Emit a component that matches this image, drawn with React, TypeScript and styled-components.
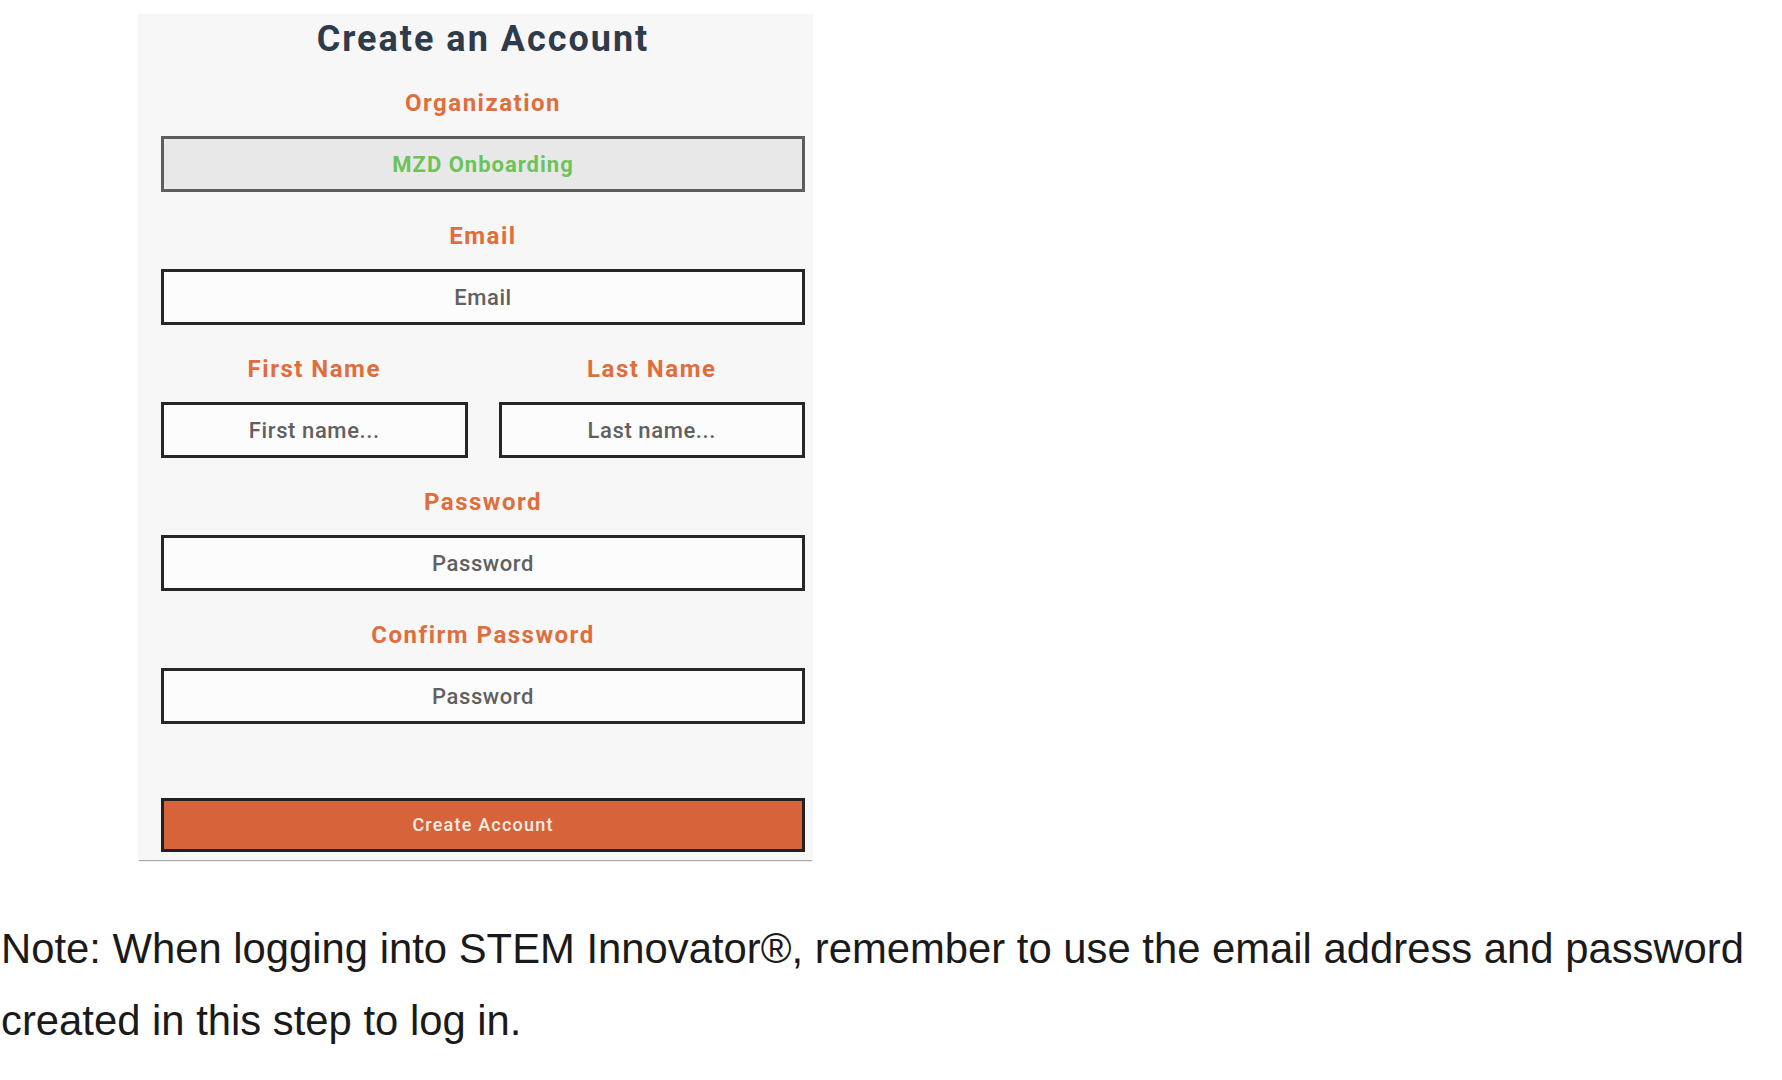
import styled, { createGlobalStyle } from "styled-components"

const GlobalStyle = createGlobalStyle`
  body {
    margin: 0;
    background: #ffffff;
    font-family: Roboto, "Liberation Sans", sans-serif;
  }
`

const Page = styled.div`
  padding-top: 14px;
`

const Figure = styled.div`
  padding-left: 138px;
`

const Card = styled.form`
  width: 675px;
  box-sizing: border-box;
  padding: 3px 8px 8px 23px;
  background: #f7f7f7;
  box-shadow: 0 2px 1px -1px rgba(0, 0, 0, 0.35);
  display: flex;
  flex-direction: column;
`

const Title = styled.h1`
  margin: 0;
  font: 700 36px/44px Roboto, sans-serif;
  letter-spacing: 2px;
  color: #2f3b4b;
  text-align: center;
`

const Fields = styled.div`
  margin-top: 27px;
  display: flex;
  flex-direction: column;
  gap: 29px;
`

const Row = styled.div`
  display: grid;
  grid-template-columns: 1fr 1fr;
  gap: 31px;
`

const Field = styled.label`
  display: flex;
  flex-direction: column;
  gap: 18px;
`

const Label = styled.span`
  font: 700 24px/30px Roboto, sans-serif;
  letter-spacing: 1.5px;
  color: #df6e3c;
  text-align: center;
`

const Input = styled.input<{ $locked?: boolean }>`
  height: 56px;
  box-sizing: border-box;
  width: 100%;
  margin: 0;
  border: 3px solid ${p => (p.$locked ? "#5d5d5d" : "#262626")};
  background: ${p => (p.$locked ? "#e8e8e8" : "#fcfcfc")};
  font: ${p => (p.$locked ? 700 : 500)} 22px Roboto, sans-serif;
  letter-spacing: ${p => (p.$locked ? "1px" : "0.6px")};
  color: ${p => (p.$locked ? "#6cc35a" : "#333")};
  text-align: center;
  outline: none;

  &::placeholder {
    color: #606060;
    opacity: 1;
  }
`

const Submit = styled.button`
  margin-top: 74px;
  height: 54px;
  box-sizing: border-box;
  border: 3px solid #222;
  background: #d6633a;
  color: #f8ece6;
  font: 500 18px Roboto, sans-serif;
  letter-spacing: 1.2px;
  padding-bottom: 3px;
  cursor: pointer;
`

const Note = styled.p`
  margin: 53px 0 0;
  padding-left: 1px;
  font: 400 41.8px/72px "Liberation Sans", Arial, sans-serif;
  color: #1a1a1a;
`

const App = () => {
  return <Page>
    <GlobalStyle />
    <Figure>
      <Card onSubmit={e => e.preventDefault()}>
        <Title>Create an Account</Title>

        <Fields>
          <Field>
            <Label>Organization</Label>
            <Input $locked readOnly value="MZD Onboarding" />
          </Field>

          <Field>
            <Label>Email</Label>
            <Input type="email" placeholder="Email" />
          </Field>

          <Row>
            <Field>
              <Label>First Name</Label>
              <Input placeholder="First name..." />
            </Field>
            <Field>
              <Label>Last Name</Label>
              <Input placeholder="Last name..." />
            </Field>
          </Row>

          <Field>
            <Label>Password</Label>
            <Input type="password" placeholder="Password" />
          </Field>

          <Field>
            <Label>Confirm Password</Label>
            <Input type="password" placeholder="Password" />
          </Field>
        </Fields>

        <Submit type="submit">Create Account</Submit>
      </Card>
    </Figure>

    <Note>
      Note: When logging into STEM Innovator®, remember to use the email address and password created in this step to log in.
    </Note>
  </Page>
}

export default App
